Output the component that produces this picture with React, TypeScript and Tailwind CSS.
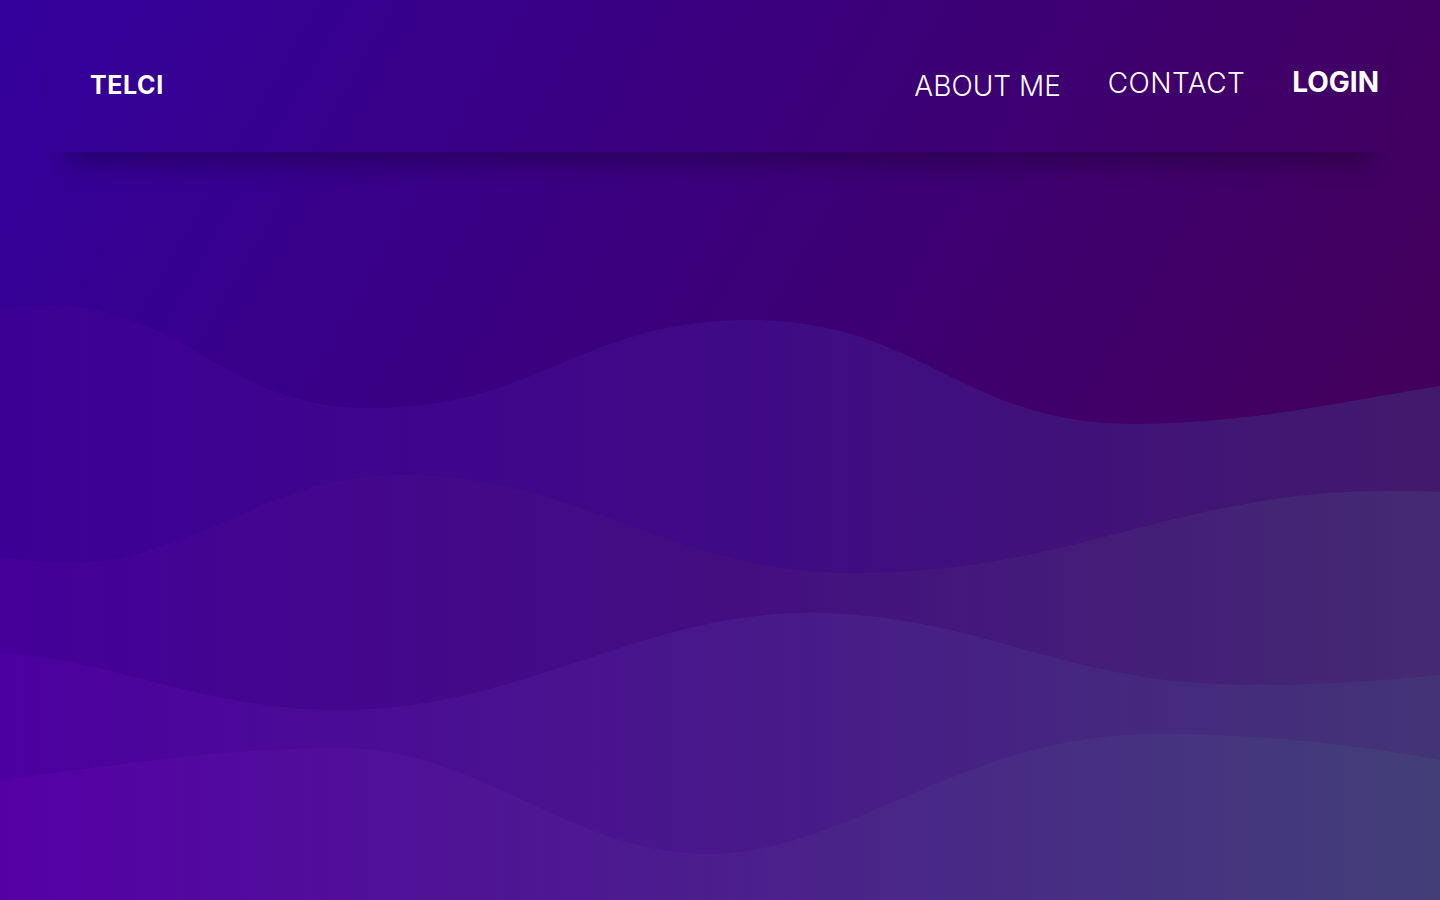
import React from 'react'

const navLinks = [
  { label: 'ABOUT ME', className: 'font-light mt-[4px]' },
  { label: 'CONTACT', className: 'font-light mt-[1px] tracking-[0.4px]' },
  { label: 'LOGIN', className: 'font-bold mt-0' }
]

const waves = [
  {
    id: 'wave1',
    stops: ['#3d0095', '#3f0a86', '#421a6c'],
    d: 'M0,308 C15,306 28,305 40,305 C190,305 220,408 370,408 C540,408 580,320 750,320 C922,320 961,424 1133,424 C1250,424 1350,400 1440,386 V900 H0 Z'
  },
  {
    id: 'wave2',
    stops: ['#440099', '#430e80', '#442a72'],
    d: 'M0,557 C25,559 45,563 64,563 C200,563 260,475 404,475 C580,475 670,573 850,573 C1080,573 1170,491 1390,491 C1410,491 1425,491 1440,492 V900 H0 Z'
  },
  {
    id: 'wave3',
    stops: ['#4c00a0', '#48188a', '#433476'],
    d: 'M0,653 C120,660 200,710 340,710 C520,710 640,613 808,613 C980,613 1060,685 1249,685 C1330,685 1390,680 1440,675 V900 H0 Z'
  },
  {
    id: 'wave4',
    stops: ['#5500a6', '#4b1e8c', '#423f78'],
    d: 'M0,780 C120,765 220,748 340,748 C480,748 570,854 707,854 C850,854 960,734 1157,734 C1280,734 1370,748 1440,760 V900 H0 Z'
  }
]

function Waves() {
  return (
    <svg className="block w-full h-full" viewBox="0 152 1440 748" preserveAspectRatio="none">
      <defs>
        {waves.map((wave) => (
          <linearGradient key={wave.id} id={wave.id} gradientUnits="userSpaceOnUse" x1="0" y1="0" x2="1440" y2="0">
            <stop offset="0" stopColor={wave.stops[0]} />
            <stop offset="0.5" stopColor={wave.stops[1]} />
            <stop offset="1" stopColor={wave.stops[2]} />
          </linearGradient>
        ))}
      </defs>
      {waves.map((wave) => (
        <path key={wave.id} d={wave.d} fill={`url(#${wave.id})`} />
      ))}
    </svg>
  )
}

export default function App() {
  return (
    <div
      className="h-screen w-full flex flex-col overflow-hidden bg-[linear-gradient(120deg,#33009c_0%,#46004f_100%)] text-white"
      style={{ fontFamily: 'Inter, "Noto Sans", sans-serif' }}
    >
      <header className="relative z-10 mx-[50px] h-[152px] shrink-0 flex items-start justify-between pt-[68px] pl-[40px] pr-[11px] shadow-[0_28px_24px_-18px_rgba(0,0,0,0.3)]">
        <a href="#" className="mt-[5px] text-[25px] leading-none font-bold tracking-[0.6px]">
          TELCI
        </a>
        <nav className="flex items-start gap-[47px]">
          {navLinks.map((link) => (
            <a key={link.label} href="#" className={`text-[28px] leading-none ${link.className}`}>
              {link.label}
            </a>
          ))}
        </nav>
      </header>
      <div className="flex-1 min-h-0">
        <Waves />
      </div>
    </div>
  )
}
